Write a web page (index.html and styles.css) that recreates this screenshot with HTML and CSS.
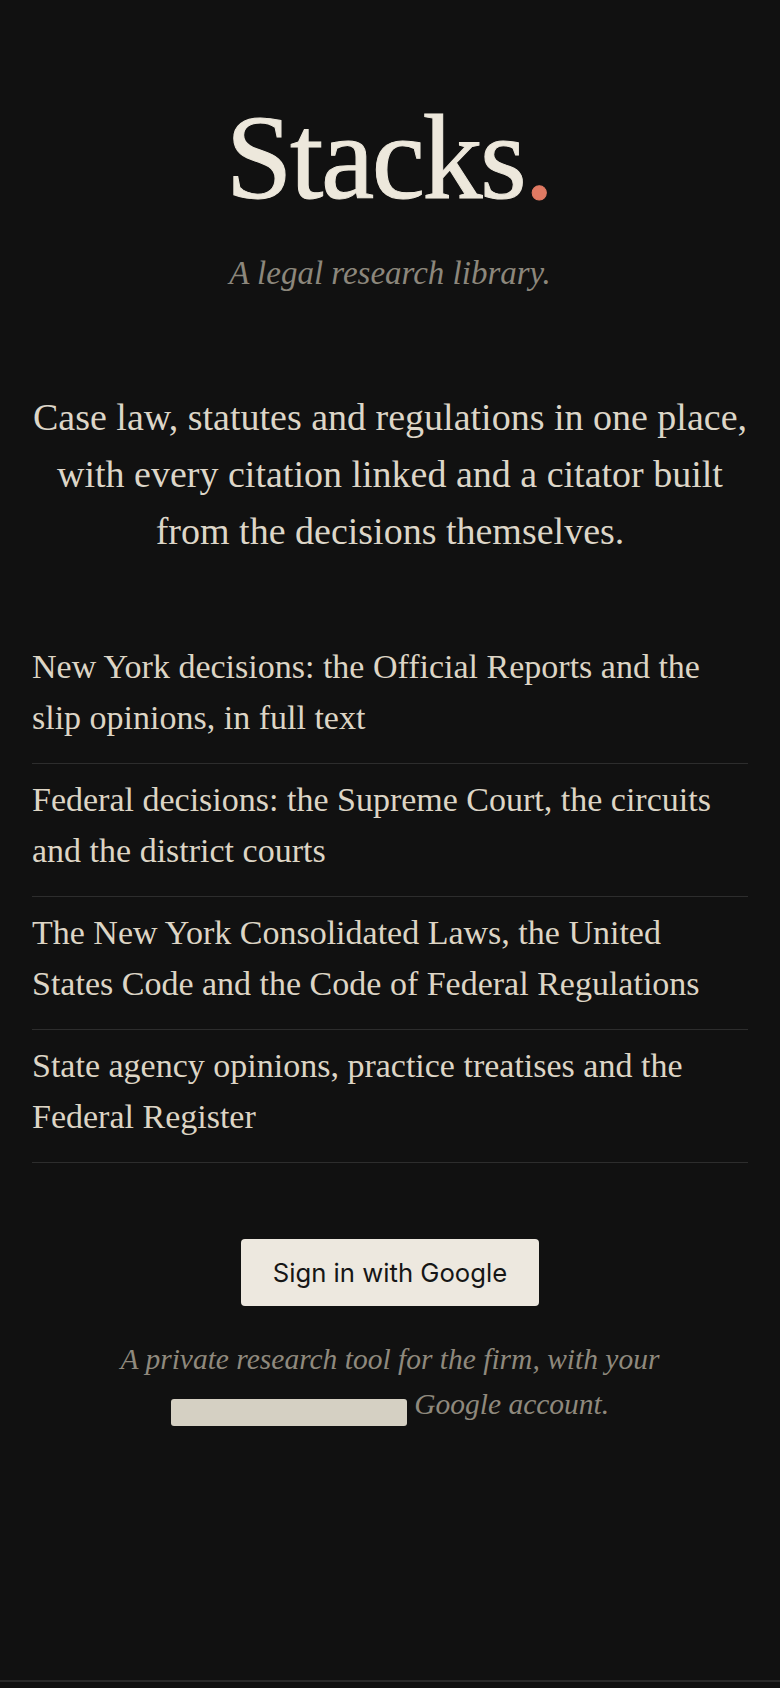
FILE: index.html
```html
<!DOCTYPE html>
<html lang="en">
<head>
<meta charset="utf-8">
<meta name="viewport" content="width=device-width, initial-scale=1">
<title>Stacks</title>
<link rel="stylesheet" href="styles.css">
</head>
<body>
<div class="page">
  <main class="main">
    <header class="masthead">
      <h1 class="title">Stacks<span class="dot">.</span></h1>
      <p class="tagline">A legal research library.</p>
    </header>
    <p class="lede">Case law, statutes and regulations in one place, with every citation linked and a citator built from the decisions themselves.</p>
    <ul class="sources">
      <li class="source">New York decisions: the Official Reports and the slip opinions, in full text</li>
      <li class="source">Federal decisions: the Supreme Court, the circuits and the district courts</li>
      <li class="source">The New York Consolidated Laws, the United States Code and the Code of Federal Regulations</li>
      <li class="source">State agency opinions, practice treatises and the Federal Register</li>
    </ul>
    <div class="actions">
      <button class="signin" type="button">Sign in with Google</button>
    </div>
    <p class="note">A private research tool for the firm, with your <span class="redacted"></span> Google account.</p>
  </main>
  <footer class="footer"></footer>
</div>
</body>
</html>
```

FILE: styles.css
```css
* { box-sizing: border-box; }

html, body {
  margin: 0;
  padding: 0;
  background: #111111;
}

body {
  font-family: "Liberation Serif", "Times New Roman", serif;
  color: #ddd6c8;
}

.page {
  min-height: 100vh;
  display: flex;
  flex-direction: column;
}

.main {
  flex: 1;
  padding: 98px 32px 0;
}

.masthead {
  text-align: center;
}

.title {
  margin: 0;
  font-family: "Liberation Serif", serif;
  font-weight: 400;
  font-size: 120px;
  line-height: 120px;
  letter-spacing: -2.5px;
  color: #ede8dc;
  -webkit-text-stroke: 1px #ede8dc;
}

.dot {
  color: #e07a63;
  letter-spacing: 0;
  -webkit-text-stroke: 1px #e07a63;
}

.tagline {
  margin: 35px 0 0;
  font-style: italic;
  font-size: 33px;
  line-height: 40px;
  color: #8c877c;
}

.lede {
  margin: 96px -10px 0;
  text-align: center;
  font-size: 38px;
  line-height: 57px;
  color: #ddd6c8;
}

.sources {
  list-style: none;
  margin: 71px 0 0;
  padding: 0;
}

.source {
  padding: 10px 0 20px;
  border-bottom: 1px solid #2d2d2d;
  font-size: 34px;
  line-height: 51px;
  color: #ddd5c5;
}

.actions {
  display: flex;
  justify-content: center;
  margin-top: 76px;
}

.signin {
  margin: 0;
  border: 0;
  border-radius: 4px;
  background: #ede8df;
  color: #161616;
  font-family: Inter, "Liberation Sans", sans-serif;
  font-size: 25.7px;
  line-height: 30px;
  padding: 18.5px 32px;
  cursor: pointer;
}

.note {
  margin: 31px 0 0;
  text-align: center;
  font-style: italic;
  font-size: 29.5px;
  line-height: 45px;
  color: #8f897d;
}

.redacted {
  display: inline-block;
  width: 236px;
  height: 27px;
  border-radius: 3px;
  background: #d5d0c3;
  vertical-align: -12px;
}

.footer {
  height: 8px;
  border-top: 2px solid #2a2a2a;
}
```
